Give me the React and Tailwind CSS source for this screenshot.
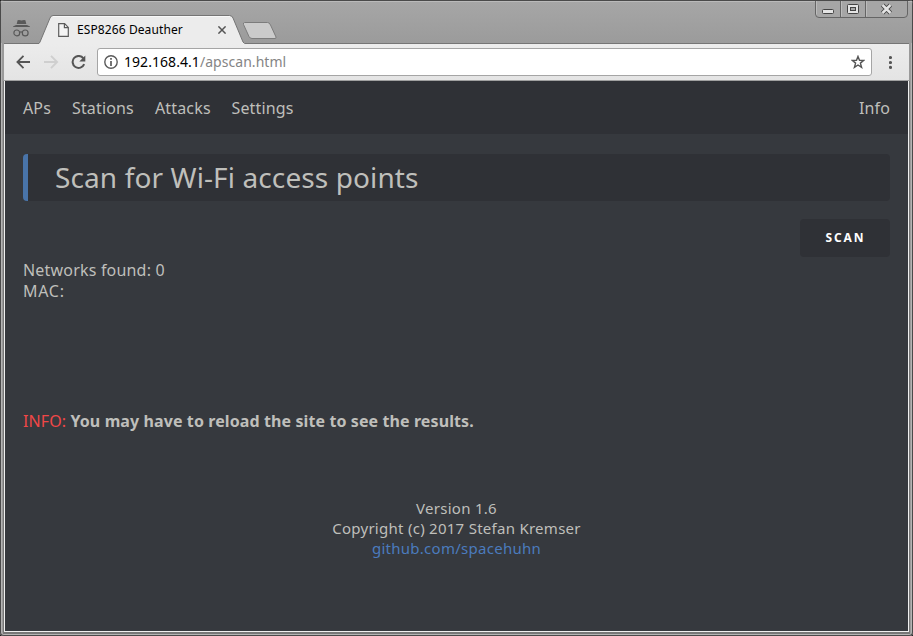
import React from "react";

function Incognito() {
  return (
    <svg className="ml-[13px] mt-[20px] h-[17px] w-[17px] shrink-0" viewBox="0 0 17 17" fill="none">
      <path d="M4.6 0.2 6 0 8.5.5 11 0 12.4.2 13.3 4H3.7Z" fill="#595959" />
      <path d="M0 6.5 3 5H14L17 6.5V7H0Z" fill="#595959" />
      <circle cx="3.8" cy="12.900" r="2.900" stroke="#595959" strokeWidth="1.200" />
      <circle cx="12.200" cy="12.900" r="2.900" stroke="#595959" strokeWidth="1.200" />
      <path d="M6.500 12.300Q8 11.400 9.500 12.300" stroke="#595959" strokeWidth="1.100" />
    </svg>
  );
}

function Tab() {
  return (
    <div className="relative ml-[9px] mt-[15px] h-[29px] w-[206px] shrink-0">
      <svg className="absolute inset-0 h-[29px] w-[206px]" viewBox="0 0 206 29">
        <path d="M-.5 29 1 27 11 3Q12 .5 14 .5H190Q193 .5 194 3L204 27L206 29Z" fill="#ececec" />
        <path d="M0 28.500 1 27 11 3Q12 .5 14 .5H190.500Q193 .5 194 3L204 27 205.500 28.500" fill="none" stroke="#757575" />
        <path d="M14 1.500H191" stroke="#f8f8f8" />
      </svg>
      <div className="relative flex h-[29px] items-center pl-[19px]">
        <svg className="h-[14px] w-[11px] shrink-0" viewBox="0 0 11 14" fill="none" stroke="#5c5c5c" strokeWidth="1.200">
          <path d="M.7.7H6.600L10.300 4.400V13.300H.7Z" fill="#f5f5f5" />
          <path d="M6.400.7V4.600H10.300" />
        </svg>
        <span className="ml-[8px] w-[141px] whitespace-nowrap text-[12px] leading-[16px] tracking-[0.1px] text-black">ESP8266 Deauther</span>
        <svg className="h-[8px] w-[8px] shrink-0" viewBox="0 0 8 8" stroke="#555" strokeWidth="1.500">
          <path d="M.4.4 7.600 7.600M7.600.4.4 7.600" />
        </svg>
      </div>
    </div>
  );
}

function WindowButtons() {
  return (
    <svg className="ml-auto mr-[4px] h-[18px] w-[94px] shrink-0" viewBox="0 0 94 18" fill="none">
      <path d="M.5 1V14Q.5 17.500 4 17.500H89Q92.500 17.500 92.500 14V1" fill="#a6a6a6" stroke="#656565" />
      <path d="M25.500 1V17M50.500 1V17" stroke="#656565" />
      <path d="M1.500 1V14.500M26.500 1V16.500M51.500 1V16.500" stroke="#bcbcbc" />
      <rect x="7.500" y="9.500" width="11" height="4" rx="1" fill="#e4e4e4" stroke="#444" />
      <rect x="32.500" y="4.500" width="11" height="9" rx="1" fill="#e4e4e4" stroke="#444" />
      <rect x="35.500" y="7.500" width="5" height="3" fill="#a6a6a6" stroke="#444" />
      <path d="M67.500 5 75.500 13M75.500 5 67.500 13" stroke="#444" strokeWidth="4.400" />
      <path d="M67.500 5 75.500 13M75.500 5 67.500 13" stroke="#e4e4e4" strokeWidth="2.500" />
    </svg>
  );
}

function Toolbar() {
  return (
    <div className="mx-[4px] flex h-[37px] shrink-0 items-center border-b border-[#a0a0a0] bg-linear-to-b from-[#ececec] to-[#e4e4e4]">
      <svg className="ml-[12px] h-[14px] w-[15px] shrink-0" viewBox="0 0 15 14" fill="none" stroke="#555" strokeWidth="1.800">
        <path d="M14 7H1.600M7.500.8 1.400 7 7.500 13.200" />
      </svg>
      <svg className="ml-[13px] h-[14px] w-[15px] shrink-0" viewBox="0 0 15 14" fill="none" stroke="#cfcfcf" strokeWidth="1.900">
        <path d="M0 7H13M7 .8 13.100 7 7 13.200" />
      </svg>
      <svg className="ml-[12px] h-[15px] w-[15px] shrink-0" viewBox="0 0 15 15" fill="none">
        <path d="M12.400 3.300A6 6 0 1 0 13.200 9.200" stroke="#555" strokeWidth="2" />
        <path d="M14.300.6V6.600H8.300Z" fill="#555" />
      </svg>
      <div className="ml-[11px] flex h-[28px] w-[775px] items-center rounded-[3px] border border-[#a5a5a5] bg-white px-[6px]">
        <svg className="h-[14px] w-[14px] shrink-0" viewBox="0 0 14 14" fill="none">
          <circle cx="7" cy="7" r="6.200" stroke="#5a5a5a" strokeWidth="1.400" />
          <path d="M7 3.100V4.800M7 6V10.900" stroke="#5a5a5a" strokeWidth="1.700" />
        </svg>
        <span className="ml-[6px] whitespace-nowrap text-[14px] leading-[20px] tracking-[0.05px] text-[#858585]">
          <span className="text-black">192.168.4.1</span>/apscan.html
        </span>
        <svg className="ml-auto h-[14px] w-[14px] shrink-0" viewBox="0 0 14 14" fill="none" stroke="#555" strokeWidth="1.400">
          <path d="M7 1.400 8.500 5.300 12.700 5.500 9.400 8.100 10.600 12.400 7 10 3.400 12.400 4.600 8.100 1.300 5.500 5.500 5.300Z" />
        </svg>
      </div>
      <svg className="ml-[17px] h-[14px] w-[4px] shrink-0" viewBox="0 0 4 14" fill="#555">
        <circle cx="1.500" cy="2.500" r="1.600" />
        <circle cx="1.500" cy="7.500" r="1.600" />
        <circle cx="1.500" cy="12.400" r="1.600" />
      </svg>
    </div>
  );
}

export default function App() {
  return (
    <div className="h-[636px] w-[913px] overflow-hidden bg-[#222]">
      <div className="flex h-[636px] w-[913px] flex-col overflow-hidden rounded-[4px] bg-[#9a9a9a] font-['Noto_Sans','Open_Sans',sans-serif] shadow-[inset_0_0_0_1px_#4a4a4a,inset_0_0_0_2px_#b4b4b4]">
        <div className="mx-px mt-px flex h-[42px] shrink-0 items-start border-t border-[#bababa] bg-linear-to-b from-[#a6a6a6] to-[#9b9b9b]">
          <div className="-mx-px -mt-[2px] flex h-[44px] w-[913px] shrink-0 items-start">
            <Incognito />
            <Tab />
            <svg className="-ml-[4px] mt-[21px] h-[19px] w-[37px] shrink-0" viewBox="0 0 37 19">
              <path d="M3.500 1.500H26.500Q28.500 1.500 29.500 4L35 16Q35.500 17.500 34 17.500H11Q9 17.500 8 15.500L2.500 3.500Q2 1.500 3.500 1.500Z" fill="#cbcbcb" stroke="#7c7c7c" />
            </svg>
            <WindowButtons />
          </div>
        </div>
        <div className="flex h-px shrink-0 px-[4px]">
          <div className="w-[36px] bg-[#757575]" />
          <div className="w-[204px] bg-[#ececec]" />
          <div className="grow bg-[#757575]" />
        </div>
        <Toolbar />
        <div className="mx-[4px] flex h-[551px] shrink-0 flex-col border-x border-b border-[#f0f0f0] bg-[#36393e] text-[#bfbfbb] shadow-[0_1px_0_1px_#777]">
          <nav className="flex h-[53px] shrink-0 items-center bg-[#2f3136] px-[18px] text-[16px] leading-[22px] tracking-[0.15px]">
            <span className="w-[49px]">APs</span>
            <span className="w-[83px]">Stations</span>
            <span className="w-[76.5px]">Attacks</span>
            <span>Settings</span>
            <span className="ml-auto">Info</span>
          </nav>
          <main className="flex flex-col px-[18px] pt-[20px]">
            <h1 className="flex h-[47px] items-center rounded-[4px] border-l-[5px] border-[#4974a9] bg-[#2f3136] pb-[2px] pl-[27px] text-[28px] leading-[40px] tracking-[0.11px]">
              Scan for Wi-Fi access points
            </h1>
            <button className="mt-[18px] h-[38px] w-[90px] self-end rounded-[4px] bg-[#2f3136] pl-[1px] text-[12px] font-bold tracking-[1.900px] text-white">
              SCAN
            </button>
            <p className="mt-[3px] text-[16px] leading-[21px] tracking-[0.19px]">
              Networks found: 0<br />
              <span className="tracking-[0.7px]">MAC:</span>
            </p>
            <p className="mt-[109px] text-[16px] leading-[21px] tracking-[0.1px]">
              <span className="text-[#f04747]">INFO:</span> <b>You may have to reload the site to see the results.</b>
            </p>
            <footer className="mt-[66px] text-center text-[15px] leading-[20px] tracking-[0.27px]">
              Version 1.6<br />
              Copyright (c) 2017 Stefan Kremser<br />
              <a className="text-[#4b7bbd]">github.com/spacehuhn</a>
            </footer>
          </main>
        </div>
      </div>
    </div>
  );
}
